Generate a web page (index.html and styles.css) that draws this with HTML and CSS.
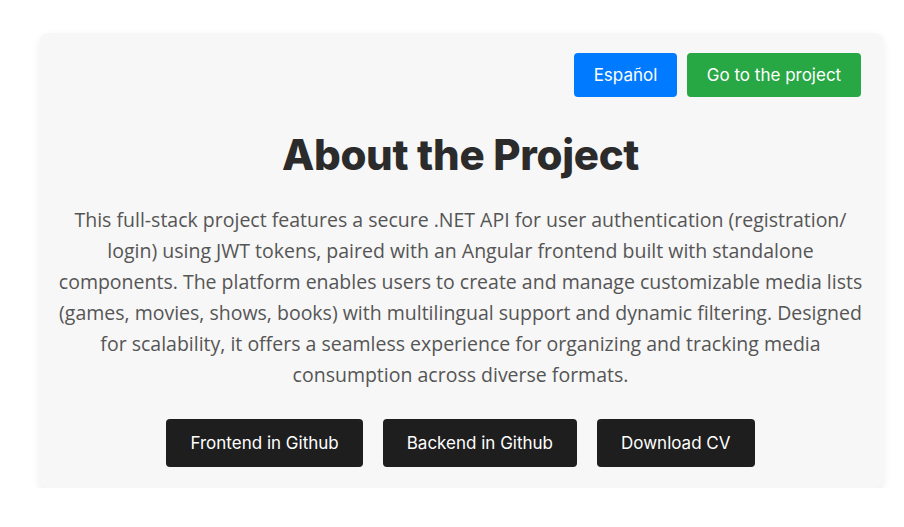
FILE: index.html
```html
<!DOCTYPE html>
<html lang="en">
<head>
<meta charset="utf-8">
<title>About the Project</title>
<link rel="stylesheet" href="styles.css">
</head>
<body>
<section class="card">
  <div class="top-actions">
    <a class="btn btn-blue" href="#">Español</a>
    <a class="btn btn-green" href="#">Go to the project</a>
  </div>
  <h1 class="title">About the Project</h1>
  <p class="desc">This full-stack project features a secure .NET API for user authentication (registration/ login) using JWT tokens, paired with an Angular frontend built with standalone components. The platform enables users to create and manage customizable media lists (games, movies, shows, books) with multilingual support and dynamic filtering. Designed for scalability, it offers a seamless experience for organizing and tracking media consumption across diverse formats.</p>
  <div class="links">
    <a class="btn btn-dark" href="#">Frontend in Github</a>
    <a class="btn btn-dark" href="#">Backend in Github</a>
    <a class="btn btn-dark" href="#">Download CV</a>
  </div>
</section>
</body>
</html>
```
FILE: styles.css
```css
html, body {
  margin: 0;
  padding: 0;
  background: #ffffff;
}
body {
  padding: 33px 21px 0 40px;
}
.card {
  background: #f7f7f7;
  border-radius: 8px;
  box-shadow: 0 4px 10px rgba(0,0,0,0.08);
  padding: 20px 22px 21px 20px;
  display: flex;
  flex-direction: column;
  align-items: center;
}
.top-actions {
  align-self: stretch;
  display: flex;
  justify-content: flex-end;
  gap: 10px;
}
.btn {
  display: inline-flex;
  align-items: center;
  justify-content: center;
  color: #fff;
  text-decoration: none;
  border-radius: 4px;
  font-family: "Inter", "Noto Sans", sans-serif;
  font-weight: 400;
  font-size: 17px;
}
.btn-blue { background: #007bff; width: 103px; height: 44px; }
.btn-green { background: #28a745; width: 174px; height: 44px; }
.btn-dark {
  background: #1e1e1e;
  height: 48px;
  padding: 0 24px;
}
.title {
  margin: 33px 0 0;
  font-family: "Inter", "Noto Sans", sans-serif;
  font-weight: 800;
  font-size: 42px;
  letter-spacing: -0.3px;
  line-height: 1.2;
  color: #2b2b2b;
}
.desc {
  margin: 24px -8px 0;
  max-width: 813px;
  font-family: "Open Sans", sans-serif;
  font-size: 19.5px;
  line-height: 31px;
  color: #555555;
  text-align: center;
}
.links {
  margin-top: 29px;
  display: flex;
  gap: 20px;
  justify-content: center;
}
```
